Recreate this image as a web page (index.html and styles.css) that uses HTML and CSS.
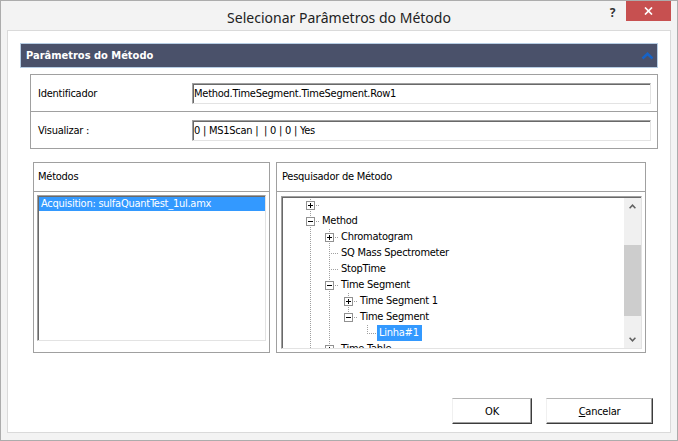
FILE: index.html
```html
<!DOCTYPE html>
<html lang="pt">
<head>
<meta charset="utf-8">
<title>Selecionar Parâmetros do Método</title>
<link rel="stylesheet" href="styles.css">
</head>
<body>
<div class="window">
  <div class="titlebar">
    <div class="tb-side"></div>
    <div class="title">Selecionar Parâmetros do Método</div>
    <div class="tb-side tb-right">
      <span class="help">?</span>
      <span class="close"><svg width="9" height="8" viewBox="0 0 9 8"><path d="M1 0.5 L8 7.5 M8 0.5 L1 7.5" stroke="#fff" stroke-width="1.7" fill="none"/></svg></span>
    </div>
  </div>
  <div class="client">
    <div class="section-head">
      <span>Parâmetros do Método</span>
      <svg class="chev" width="13" height="8" viewBox="0 0 13 8"><path d="M1.5 6.5 L6.5 1.8 L11.5 6.5" stroke="#1763c6" stroke-width="2.6" fill="none"/></svg>
    </div>
    <div class="fields">
      <div class="field-row">
        <span class="field-label">Identificador</span>
        <div class="input">Method.TimeSegment.TimeSegment.Row1</div>
      </div>
      <div class="field-row">
        <span class="field-label">Visualizar :</span>
        <div class="input">0 | MS1Scan |  | 0 | 0 | Yes</div>
      </div>
    </div>
    <div class="panels">
      <div class="panel panel-methods">
        <div class="panel-head">Métodos</div>
        <div class="listbox">
          <div class="list-item selected">Acquisition: sulfaQuantTest_1ul.amx</div>
        </div>
      </div>
      <div class="panel panel-browser">
        <div class="panel-head">Pesquisador de Método</div>
        <div class="treebox">
          <div class="tree">
            <div class="rows">
              <div class="row"><span class="cell tee"><svg class="exp" width="9" height="9"><rect x="0.5" y="0.5" width="8" height="8" fill="#fff" stroke="#919191"/><path d="M2 4.5h5M4.5 2v5" stroke="#000"/></svg></span><span class="label"></span></div>
              <div class="row"><span class="cell tee"><svg class="exp" width="9" height="9"><rect x="0.5" y="0.5" width="8" height="8" fill="#fff" stroke="#919191"/><path d="M2 4.5h5" stroke="#000"/></svg></span><span class="label">Method</span></div>
              <div class="row"><span class="cell v"></span><span class="cell tee"><svg class="exp" width="9" height="9"><rect x="0.5" y="0.5" width="8" height="8" fill="#fff" stroke="#919191"/><path d="M2 4.5h5M4.5 2v5" stroke="#000"/></svg></span><span class="label">Chromatogram</span></div>
              <div class="row"><span class="cell v"></span><span class="cell tee"></span><span class="label">SQ Mass Spectrometer</span></div>
              <div class="row"><span class="cell v"></span><span class="cell tee"></span><span class="label">StopTime</span></div>
              <div class="row"><span class="cell v"></span><span class="cell tee"><svg class="exp" width="9" height="9"><rect x="0.5" y="0.5" width="8" height="8" fill="#fff" stroke="#919191"/><path d="M2 4.5h5" stroke="#000"/></svg></span><span class="label">Time Segment</span></div>
              <div class="row"><span class="cell v"></span><span class="cell v"></span><span class="cell tee"><svg class="exp" width="9" height="9"><rect x="0.5" y="0.5" width="8" height="8" fill="#fff" stroke="#919191"/><path d="M2 4.5h5M4.5 2v5" stroke="#000"/></svg></span><span class="label">Time Segment 1</span></div>
              <div class="row"><span class="cell v"></span><span class="cell v"></span><span class="cell end"><svg class="exp" width="9" height="9"><rect x="0.5" y="0.5" width="8" height="8" fill="#fff" stroke="#919191"/><path d="M2 4.5h5" stroke="#000"/></svg></span><span class="label">Time Segment</span></div>
              <div class="row"><span class="cell v"></span><span class="cell v"></span><span class="cell"></span><span class="cell end"></span><span class="label selected">Linha#1</span></div>
              <div class="row"><span class="cell v"></span><span class="cell tee"><svg class="exp" width="9" height="9"><rect x="0.5" y="0.5" width="8" height="8" fill="#fff" stroke="#919191"/><path d="M2 4.5h5M4.5 2v5" stroke="#000"/></svg></span><span class="label">Time Table</span></div>
            </div>
          </div>
          <div class="scrollbar">
            <div class="sb-arrow"><svg width="7" height="5" viewBox="0 0 7 5"><path d="M0.6 4.3 L3.5 1.2 L6.4 4.3" stroke="#606060" stroke-width="1.5" fill="none"/></svg></div>
            <div class="sb-track"><div class="sb-thumb"></div></div>
            <div class="sb-arrow"><svg width="7" height="5" viewBox="0 0 7 5"><path d="M0.6 0.7 L3.5 3.8 L6.4 0.7" stroke="#606060" stroke-width="1.5" fill="none"/></svg></div>
          </div>
        </div>
      </div>
    </div>
    <div class="buttons">
      <button class="btn btn-ok">OK</button>
      <button class="btn btn-cancel"><u>C</u>ancelar</button>
    </div>
  </div>
</div>
</body>
</html>
```

FILE: styles.css
```css
html, body {
  margin: 0;
  padding: 0;
  background: #fff;
}

.window {
  width: 678px;
  height: 441px;
  box-sizing: border-box;
  border: 1px solid #acacac;
  background: #f3f3f3;
  display: flex;
  flex-direction: column;
  font-family: "DejaVu Sans Condensed", "DejaVu Sans", sans-serif;
  font-stretch: condensed;
  font-size: 11px;
  letter-spacing: -0.25px;
  color: #000;
}

/* title bar */
.titlebar {
  height: 29px;
  flex: none;
  display: grid;
  grid-template-columns: 1fr auto 1fr;
}

.title {
  font-family: "Noto Sans", "Open Sans", sans-serif;
  font-stretch: normal;
  font-size: 14px;
  letter-spacing: 0;
  color: #222;
  line-height: 29px;
  padding-top: 2px;
}

.tb-right {
  display: flex;
  justify-content: flex-end;
  align-items: flex-start;
  padding-right: 6px;
}

.help {
  width: 27px;
  height: 22px;
  text-align: center;
  font-family: "Noto Sans", sans-serif;
  font-stretch: normal;
  font-weight: bold;
  font-size: 12px;
  letter-spacing: 0;
  line-height: 24px;
  color: #333;
}

.close {
  width: 45px;
  height: 20px;
  background: #c75050;
  display: flex;
  align-items: center;
  justify-content: center;
}

/* client area */
.client {
  flex: 1;
  margin: 0 6px 7px 6px;
  border: 1px solid #dadada;
  background: #fff;
  display: flex;
  flex-direction: column;
  padding: 12px 12px 8px 12px;
  min-height: 0;
}

.section-head {
  height: 25px;
  box-sizing: border-box;
  border: 1px solid #b6cde4;
  background: #4a516a;
  color: #fff;
  font-weight: bold;
  letter-spacing: 0;
  display: flex;
  align-items: center;
  justify-content: space-between;
  padding: 0 3px 0 5px;
  flex: none;
}

.chev {
  display: block;
}

.fields {
  margin: 6px 0 0 10px;
  border: 1px solid #a0a0a0;
  flex: none;
}

.field-row {
  height: 36px;
  display: flex;
  align-items: center;
  padding: 0 6px 0 7px;
}

.field-row + .field-row {
  border-top: 1px solid #a0a0a0;
}

.field-label {
  width: 154px;
  flex: none;
}

.input {
  flex: 1;
  height: 21px;
  box-sizing: border-box;
  border: 1px solid;
  border-color: #a0a0a0 #e3e3e3 #e3e3e3 #a0a0a0;
  box-shadow: inset 1px 1px 0 #696969;
  padding: 1px 0 0 1px;
  line-height: 18px;
  white-space: pre;
  overflow: hidden;
}

/* lower panels */
.panels {
  margin: 13px 12px 0 13px;
  height: 191px;
  display: flex;
  gap: 6px;
  flex: none;
}

.panel {
  box-sizing: border-box;
  border: 1px solid #a0a0a0;
  display: flex;
  flex-direction: column;
}

.panel-methods {
  width: 237px;
  flex: none;
}

.panel-browser {
  flex: 1;
  min-width: 0;
}

.panel-head {
  height: 28px;
  line-height: 28px;
  border-bottom: 1px solid #a0a0a0;
  padding-left: 4px;
  flex: none;
}

.panel-browser .panel-head {
  padding-left: 5px;
}

.listbox,
.treebox {
  border: 1px solid;
  border-color: #a0a0a0 #e3e3e3 #e3e3e3 #a0a0a0;
  box-shadow: inset 1px 1px 0 #696969;
  padding: 1px 0 0 1px;
  flex: 1;
  min-height: 0;
  overflow: hidden;
}

.listbox {
  margin: 3px 3px 11px 3px;
}

.list-item {
  height: 14px;
  line-height: 14px;
  padding-left: 2px;
  white-space: nowrap;
}

.selected {
  background: #3399ff;
  color: #fff;
}

.treebox {
  margin: 4px 3px 3px 4px;
  display: flex;
}

.tree {
  flex: 1;
  min-width: 0;
  overflow: hidden;
  padding-left: 17px;
}

.rows {
  margin-top: -1px;
}

.row {
  height: 16px;
  display: flex;
}

.cell {
  width: 19px;
  height: 16px;
  flex: none;
  box-sizing: border-box;
  padding: 4px 0 0 6px;
  background-repeat: no-repeat;
}

.exp {
  display: block;
}

.v {
  background-image: repeating-linear-gradient(to bottom, #a0a0a0 0 1px, transparent 1px 2px);
  background-size: 1px 16px;
  background-position: 10px 0;
}

.tee {
  background-image:
    repeating-linear-gradient(to bottom, #a0a0a0 0 1px, transparent 1px 2px),
    repeating-linear-gradient(to right, #a0a0a0 0 1px, transparent 1px 2px);
  background-size: 1px 16px, 9px 1px;
  background-position: 10px 0, 10px 8px;
}

.end {
  background-image:
    repeating-linear-gradient(to bottom, #a0a0a0 0 1px, transparent 1px 2px),
    repeating-linear-gradient(to right, #a0a0a0 0 1px, transparent 1px 2px);
  background-size: 1px 9px, 9px 1px;
  background-position: 10px 0, 10px 8px;
}

.label {
  margin-left: 1px;
  padding: 0 3px 0 2px;
  line-height: 16px;
  height: 16px;
  white-space: nowrap;
}

.scrollbar {
  width: 17px;
  flex: none;
  background: #f0f0f0;
  display: flex;
  flex-direction: column;
}

.sb-arrow {
  height: 17px;
  display: flex;
  align-items: center;
  justify-content: center;
  flex: none;
}

.sb-track {
  flex: 1;
}

.sb-thumb {
  margin-top: 30px;
  height: 71px;
  background: #cdcdcd;
}

/* buttons */
.buttons {
  margin-top: auto;
  display: flex;
  justify-content: flex-end;
  gap: 14px;
  padding-right: 5px;
  flex: none;
}

.btn {
  height: 26px;
  box-sizing: border-box;
  background: #fff;
  border-style: solid;
  border-width: 1px;
  border-color: #b4b4b4 #3c3c3c #3c3c3c #f0f0f0;
  box-shadow: inset -1px -1px 0 #a0a0a0;
  font: inherit;
  letter-spacing: inherit;
  color: #000;
  padding: 0;
  text-align: center;
}

.btn-ok {
  width: 80px;
}

.btn-cancel {
  width: 107px;
}
```
